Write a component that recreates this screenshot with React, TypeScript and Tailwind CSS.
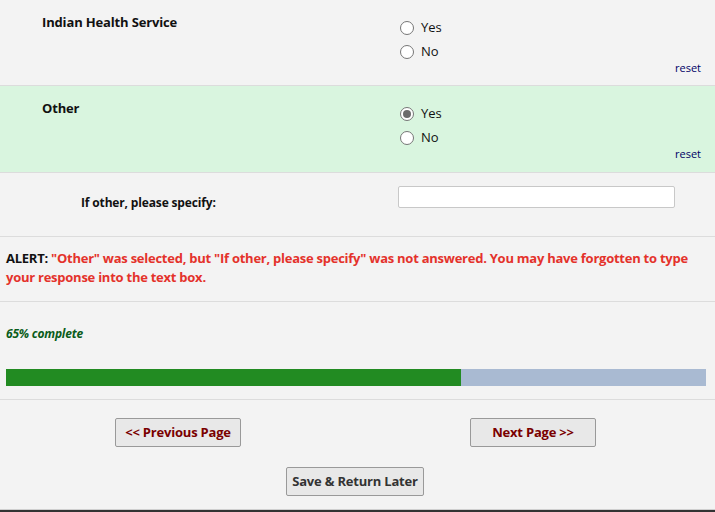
const font = { fontFamily: '"Open Sans", "Liberation Sans", sans-serif' };

function Radio({ label, checked }: { label: string; checked?: boolean }) {
  return (
    <label className="flex items-center gap-[7px] h-[24px] text-[13px] text-[#111]">
      <span className="w-[14px] h-[14px] rounded-full border border-[#767676] bg-white flex items-center justify-center">
        {checked && <span className="w-[8px] h-[8px] rounded-full bg-[#6b6b6b]" />}
      </span>
      {label}
    </label>
  );
}

function YesNoRow({ title, selected, green, tall }: { title: string; selected?: string; green?: boolean; tall?: boolean }) {
  return (
    <div className={`flex border-b border-[#dcdcdc] ${tall ? "h-[87px]" : "h-[86px]"} ${green ? "bg-[#d9f5df]" : ""}`}>
      <div className="w-[398px] pl-[42px] pt-[13px] text-[13px] font-bold tracking-[-0.15px] text-[#111]">{title}</div>
      <div className="flex-1 flex flex-col pt-[16px] pl-[2px] pr-[14px]">
        <Radio label="Yes" checked={selected === "Yes"} />
        <Radio label="No" checked={selected === "No"} />
        <div className="self-end text-[11px] text-[#000066] -mt-[4px]">reset</div>
      </div>
    </div>
  );
}

export default function App() {
  return (
    <div className="w-[715px] h-[512px] bg-[#f3f3f3] overflow-hidden" style={font}>
      <YesNoRow title="Indian Health Service" />
      <YesNoRow title="Other" selected="Yes" green tall />

      <div className="flex items-start h-[64px] border-b border-[#dcdcdc]">
        <div className="w-[398px] pl-[81px] pt-[21px] leading-[18px] text-[12px] font-bold tracking-[-0.15px] text-[#111]">
          If other, please specify:
        </div>
        <input className="mt-[13px] w-[277px] h-[22px] bg-white border border-[#c8c8c8] rounded-[2px]" />
      </div>

      <div className="h-[65px] border-b border-[#dcdcdc] px-[6px] pt-[12px] text-[13px] font-bold leading-[19px] tracking-[-0.25px] text-[#e4322b]">
        <span className="text-[#111]">ALERT:</span> "Other" was selected, but "If other, please specify" was not answered. You may
        have forgotten to type your response into the text box.
      </div>

      <div className="h-[98px] border-b border-[#dcdcdc] px-[6px] pt-[24px]">
        <div className="text-[12px] leading-[16px] font-bold italic tracking-[-0.2px] text-[#0a5c1a]">65% complete</div>
        <div className="mt-[27px] w-[700px] h-[17px] bg-[#a9bad2] flex">
          <div className="w-[455px] bg-[#228b22]" />
        </div>
      </div>

      <div className="flex flex-col pt-[18px] h-[110px] border-b border-[#cfcfcf]">
        <div className="flex w-full">
          <div className="w-[357px] flex justify-end pr-[116px]">
            <button className="w-[126px] h-[29px] bg-[#e8e8e8] border border-[#999] rounded-[2px] text-[13px] font-bold tracking-[-0.2px] text-[#7a0000]">
              &lt;&lt; Previous Page
            </button>
          </div>
          <div className="flex-1 pl-[113px]">
            <button className="w-[126px] h-[29px] bg-[#e8e8e8] border border-[#999] rounded-[2px] text-[13px] font-bold tracking-[-0.2px] text-[#7a0000]">
              Next Page &gt;&gt;
            </button>
          </div>
        </div>
        <button className="ml-[286px] mt-[20px] w-[138px] h-[29px] bg-[#e8e8e8] border border-[#999] rounded-[2px] text-[13px] font-bold tracking-[-0.2px] text-[#333]">
          Save &amp; Return Later
        </button>
      </div>
      <div className="h-[2px] bg-[#333]" />
    </div>
  );
}
